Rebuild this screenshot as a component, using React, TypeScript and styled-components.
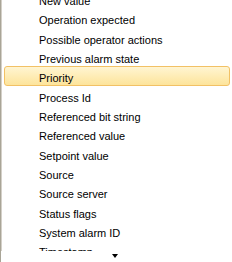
import styled, { createGlobalStyle } from "styled-components";

const GlobalStyle = createGlobalStyle`
  html, body {
    margin: 0;
    padding: 0;
    background: #fff;
  }
`;

const items = [
  "New value",
  "Operation expected",
  "Possible operator actions",
  "Previous alarm state",
  "Priority",
  "Process Id",
  "Referenced bit string",
  "Referenced value",
  "Setpoint value",
  "Source",
  "Source server",
  "Status flags",
  "System alarm ID",
  "Timestamp",
];

export default function App() {
  return (
    <>
      <GlobalStyle />
      <Frame>
        <Viewport>
          <List>
            {items.map((item) => (
              <Row key={item} $selected={item === "Priority"}>
                {item}
              </Row>
            ))}
          </List>
        </Viewport>
        <Footer>
          <Arrow />
        </Footer>
      </Frame>
    </>
  );
}

const Frame = styled.div`
  width: 232px;
  height: 262px;
  display: flex;
  flex-direction: column;
  background: #fff;
  border-left: 1px solid #a9a597;
  box-shadow: inset 1px 0 0 #d4d0c8;
  box-sizing: border-box;
  overflow: hidden;
  font-family: "Liberation Sans", Arial, sans-serif;
  font-size: 11px;
  color: #000;
`;

const Viewport = styled.div`
  flex: 1;
  overflow: hidden;
`;

const List = styled.div`
  display: flex;
  flex-direction: column;
  margin-top: -11px;
  padding: 0 2px 0 3px;
`;

const Row = styled.div<{ $selected?: boolean }>`
  height: 19.33px;
  line-height: 22px;
  padding-left: 34px;
  box-sizing: border-box;
  white-space: nowrap;
  border: 1px solid transparent;
  border-radius: 3px;
  ${(p) =>
    p.$selected &&
    `
    border-color: #f2c165;
    background: linear-gradient(#fff5d2, #fde49b);
  `}
`;

const Footer = styled.div`
  height: 11px;
  box-sizing: border-box;
  flex-shrink: 0;
  display: flex;
  justify-content: center;
  align-items: flex-start;
  padding: 3px 3px 0 0;
  background: #fff;
`;

const Arrow = styled.div`
  width: 0;
  height: 0;
  border-left: 3.5px solid transparent;
  border-right: 3.5px solid transparent;
  border-top: 4px solid #000;
`;
